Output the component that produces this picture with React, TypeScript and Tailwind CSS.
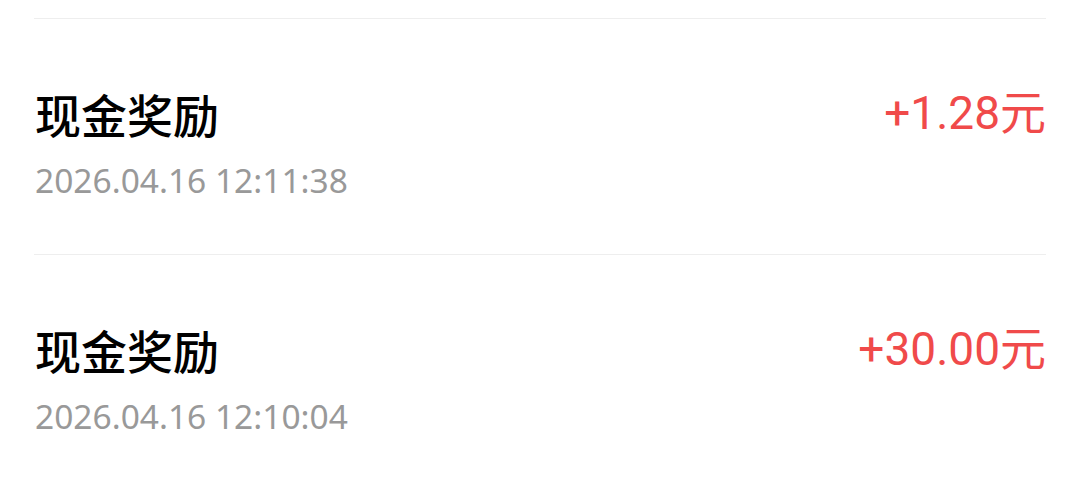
import React from "react";

interface Record {
    title: string;
    time: string;
    amount: string;
}

const records: Record[] = [
    { title: "现金奖励", time: "2026.04.16 12:11:38", amount: "+1.28元" },
    { title: "现金奖励", time: "2026.04.16 12:10:04", amount: "+30.00元" },
];

export default function App() {
    return (
        <div
            className="w-[1080px] h-[480px] bg-white overflow-hidden pt-[18px] px-[34px]"
            style={{ fontFamily: '"Noto Sans", "Noto Sans CJK SC", sans-serif' }}
        >
            {records.map((r, i) => (
                <div key={i} className="border-t border-[#eeeeee] h-[236px] flex justify-between items-start pl-[1px] pt-[67px]">
                    <div className="flex flex-col">
                        <span className="text-[46px] leading-[54px] text-black font-medium" style={{ fontFamily: '"Noto Sans CJK SC", sans-serif' }}>
                            {r.title}
                        </span>
                        <span className="text-[33.5px] leading-[40px] text-[#999999] mt-[20px]">{r.time}</span>
                    </div>
                    <span
                        className="text-[46px] leading-[54px] text-[#f04a4a]"
                        style={{ fontFamily: 'Roboto, "Noto Sans CJK SC", sans-serif' }}
                    >
                        {r.amount}
                    </span>
                </div>
            ))}
        </div>
    );
}
